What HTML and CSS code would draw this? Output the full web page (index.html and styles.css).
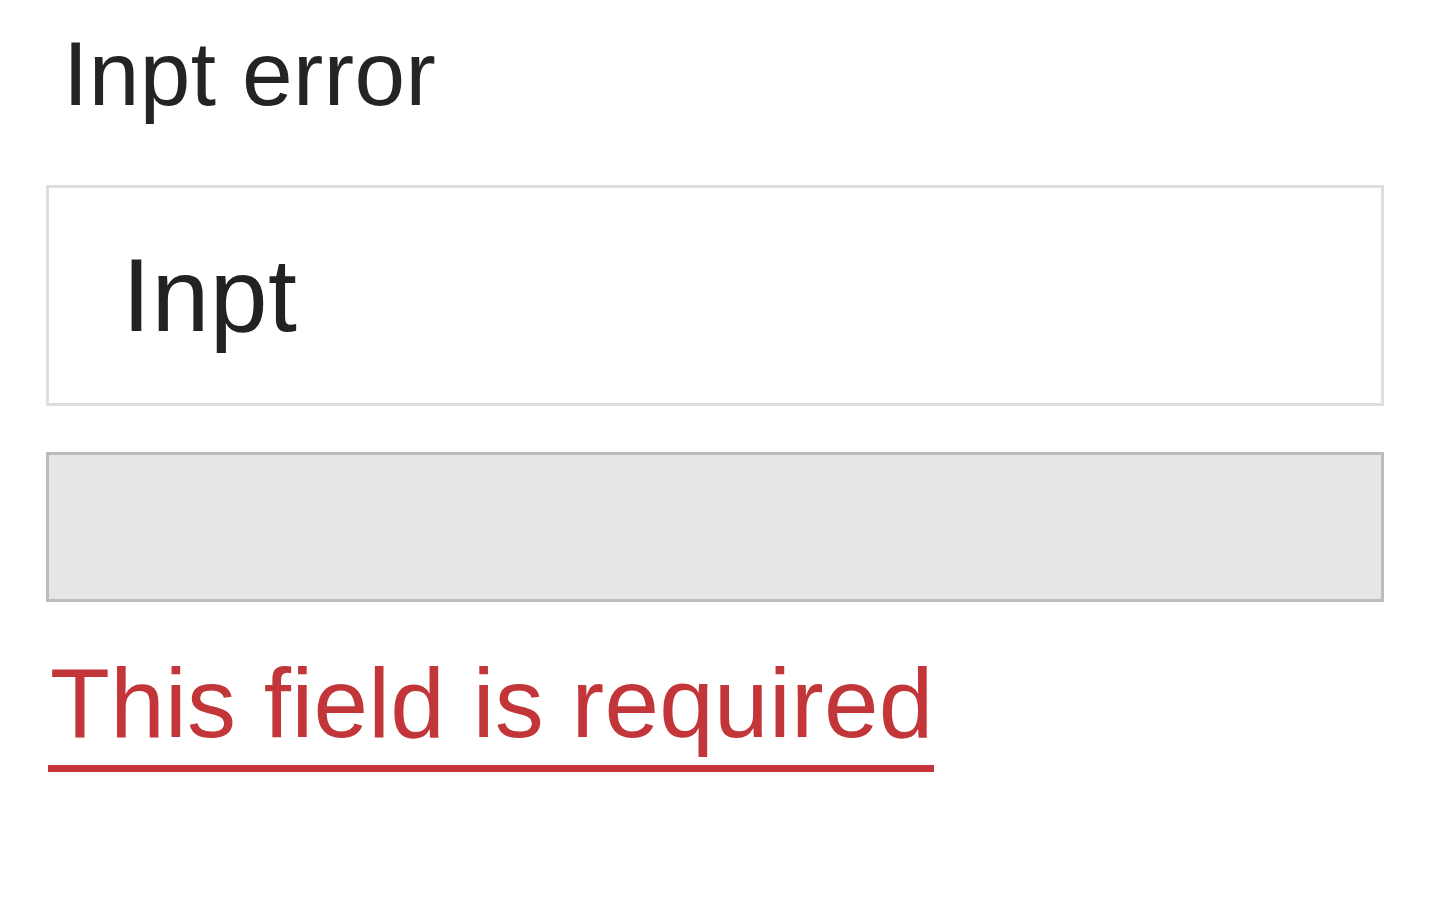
FILE: index.html
```html
<!DOCTYPE html>
<html lang="en">
<head>
    <meta charset="UTF-8">
    <meta name="viewport" content="width=device-width, initial-scale=1.0">
    <title>Inpt error</title>
    <link rel="stylesheet" href="styles.css">
</head>
<body>
    <main class="field">
        <h1 class="field-title">Inpt error</h1>
        <input class="field-input" type="text" value="Inpt">
        <div class="field-disabled"></div>
        <p class="field-error">
            <span class="field-error-text">This field is required</span>
        </p>
    </main>
</body>
</html>
```

FILE: styles.css
```css
body {
    font-family: "Liberation Sans", Arial, sans-serif;
    margin: 0;
    padding: 0;
    background-color: #fff;
}

.field {
    display: flex;
    flex-direction: column;
    align-items: flex-start;
    padding: 28px 54px 0 46px;
}

.field-title {
    margin: 0 0 66px 17px;
    font-size: 91px;
    line-height: 1;
    font-weight: 400;
    letter-spacing: 0.4px;
    color: #242424;
}

.field-input {
    box-sizing: border-box;
    width: 100%;
    height: 221px;
    margin: 0;
    padding: 0 0 0 73px;
    border: 3px solid #dedede;
    background-color: #fff;
    font-family: inherit;
    font-size: 104px;
    letter-spacing: 0.5px;
    color: #222;
    outline: none;
}

.field-disabled {
    box-sizing: border-box;
    width: 100%;
    height: 150px;
    margin-top: 46px;
    border: 3px solid #b9bdbf;
    background-color: #e6e6e6;
}

.field-error {
    margin: 52px 0 0 2px;
    font-size: 98px;
    line-height: 1;
    letter-spacing: 0.3px;
    color: #c2363a;
}

.field-error-text {
    display: inline-block;
    padding: 0 0 13px 2px;
    border-bottom: 7px solid #c6343a;
}
```
